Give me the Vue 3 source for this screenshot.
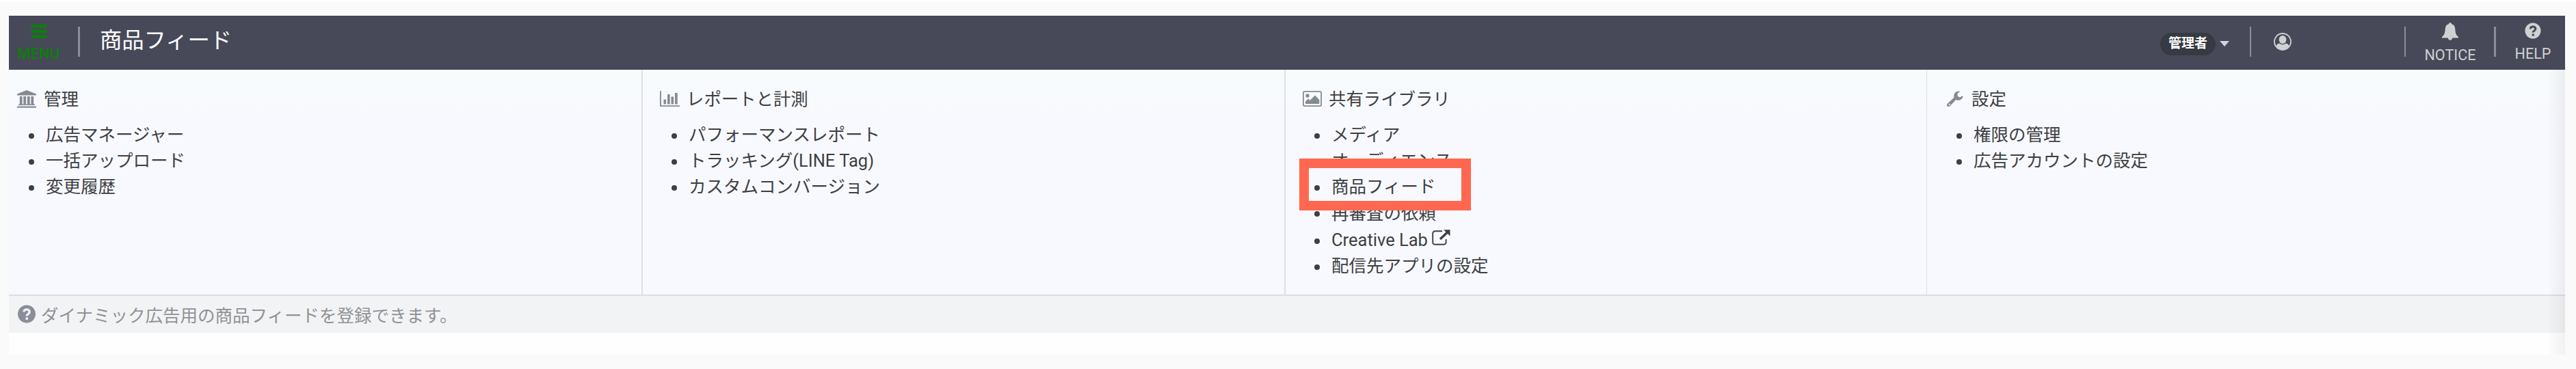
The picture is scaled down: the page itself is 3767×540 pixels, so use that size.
<!-- src/App.vue -->
<template>
  <div class="page">
    <div class="window">
      <header class="navbar">
        <button class="menu-btn">
          <svg class="menu-icon" viewBox="0 0 24 20">
            <path d="M1 2.5h22M1 10h22M1 17.5h22" stroke="currentColor" stroke-width="4.4" />
          </svg>
          <span>MENU</span>
        </button>
        <span class="divider wide"></span>
        <h1 class="page-title">商品フィード</h1>

        <span class="role">管理者</span>
        <span class="caret"></span>
        <span class="divider role-divider"></span>
        <svg class="user-icon" viewBox="0 0 26 26">
          <circle cx="13" cy="13" r="12" fill="none" stroke="currentColor" stroke-width="1.8" />
          <ellipse cx="13" cy="10" rx="5.4" ry="6" fill="currentColor" />
          <path d="M3.600 19.500C4.400 16.400 7 15.800 8.400 15.600c2.700 2.200 6.500 2.200 9.200 0 1.400.2 4 .8 4.800 3.900C20 23 17 25 13 25s-7-2-9.400-5.500z" fill="currentColor" />
        </svg>
        <span class="divider thin"></span>
        <a class="nav-item notice">
          <svg class="bell-icon" viewBox="0 0 24 26">
            <path d="M12 0c1.100 0 1.800.8 1.800 2.100 3.600.9 5.300 3.600 5.500 7.400.3 6 1.500 9.300 4.700 11.500v1.500H0V21c3.200-2.200 4.400-5.500 4.700-11.500.2-3.800 1.900-6.500 5.500-7.400C10.200.8 10.900 0 12 0zM8.800 22h6.400c0 2.300-1.300 3.800-3.200 3.800S8.800 24.300 8.800 22z" fill="currentColor" />
          </svg>
          <span>NOTICE</span>
        </a>
        <span class="divider wide"></span>
        <a class="nav-item help">
          <svg class="help-icon" viewBox="0 0 24 24">
            <circle cx="12" cy="12" r="11.500" fill="currentColor" />
            <path d="M8.200 9.200C8.300 4.800 15.900 4.900 15.900 9.200c0 2.900-3.700 2.700-3.700 5.400" fill="none" stroke="#474959" stroke-width="3" />
            <path d="M10.600 16.500h3.200v3.100h-3.200z" fill="#474959" />
          </svg>
          <span>HELP</span>
        </a>
      </header>

      <main class="body">
        <nav class="mega-menu">
          <section v-for="group in groups" :key="group.title" class="group">
            <h2 class="group-title">
              <span class="group-icon" :class="group.icon">
                <svg v-if="group.icon === 'bank'" width="28" height="26" viewBox="0 0 28 26">
                  <path d="M14 0l14 5.500v2H0v-2zM3.800 9h3.800v11.500H3.800zM9.300 9h3.800v11.500H9.300zM14.900 9h3.800v11.500h-3.800zM20.400 9h3.800v11.500h-3.800zM2 20.500h24V22H2zM0 23.500h28v2.300H0z" fill="currentColor" />
                </svg>
                <svg v-else-if="group.icon === 'chart'" width="29" height="24" viewBox="0 0 29 24">
                  <path d="M0 0h1.900v21.200H29V23H0zM5.500 12.500H9v7H5.500zM11 5h3.600v14.500H11zM16.500 8.500h3.600v11h-3.600zM22 3h3.700v16.500H22z" fill="currentColor" />
                </svg>
                <svg v-else-if="group.icon === 'picture'" width="28" height="23" viewBox="0 0 28 23">
                  <rect x="0.900" y="0.900" width="26.200" height="21.200" rx="2" fill="none" stroke="currentColor" stroke-width="1.800" />
                  <circle cx="7" cy="7" r="2.700" fill="currentColor" />
                  <path d="M4 19v-3.500l4-4 2.500 2.500 7.500-7.500 6.300 6.500v6z" fill="currentColor" />
                </svg>
                <svg v-else width="24" height="24" viewBox="0 0 24 24">
                  <path d="M19.500 1L15.600 3.600v4l3.200 1.900L23.500 7c.2 4.200-3 7.300-7.600 6.700-1-.1-1.800-.5-2.500-1L4.800 21.900c-2.900 3-6.600-.6-3.800-3.400l9.500-8.700C9.100 4.500 13.200-1.400 19.500 1zM3.900 18.700a1.100 1.100 0 1 0 .01 2.200 1.100 1.100 0 0 0 0-2.200z" fill="currentColor" fill-rule="evenodd" />
                </svg>
              </span>
              <span class="group-name">{{ group.title }}</span>
            </h2>
            <ul class="links">
              <li v-for="link in group.links" :key="link.label" :class="{ external: link.external }">
                <a>{{ link.label }}</a>
                <svg v-if="link.external" class="external-icon" viewBox="0 0 27 24">
                  <path d="M15 2.300H4.500a3.300 3.300 0 0 0-3.300 3.300v12.800a3.300 3.300 0 0 0 3.300 3.300h12.800a3.300 3.300 0 0 0 3.300-3.300V14" fill="none" stroke="currentColor" stroke-width="1.900" />
                  <path d="M12 14L23 3.500" stroke="currentColor" stroke-width="3.400" />
                  <path d="M17 .3h9.500v9.200z" fill="currentColor" />
                </svg>
                <span v-if="link.highlight" class="highlight"></span>
              </li>
            </ul>
          </section>
        </nav>

        <div class="info">
          <svg class="info-icon" viewBox="0 0 26 26">
            <circle cx="13" cy="13" r="13" fill="currentColor" />
            <path d="M8.900 10C9 5 17.200 5.100 17.200 10c0 3-4 2.900-4 5.900" fill="none" stroke="#f2f3f5" stroke-width="3.300" />
            <path d="M11.500 18h3.500v3.400h-3.500z" fill="#f2f3f5" />
          </svg>
          <span>ダイナミック広告用の商品フィードを登録できます。</span>
        </div>
      </main>
    </div>
  </div>
</template>

<script setup>
const groups = [
  {
    title: '管理',
    icon: 'bank',
    links: [
      { label: '広告マネージャー' },
      { label: '一括アップロード' },
      { label: '変更履歴' }
    ]
  },
  {
    title: 'レポートと計測',
    icon: 'chart',
    links: [
      { label: 'パフォーマンスレポート' },
      { label: 'トラッキング(LINE Tag)' },
      { label: 'カスタムコンバージョン' }
    ]
  },
  {
    title: '共有ライブラリ',
    icon: 'picture',
    links: [
      { label: 'メディア' },
      { label: 'オーディエンス' },
      { label: '商品フィード', highlight: true },
      { label: '再審査の依頼' },
      { label: 'Creative Lab', external: true },
      { label: '配信先アプリの設定' }
    ]
  },
  {
    title: '設定',
    icon: 'wrench',
    links: [
      { label: '権限の管理' },
      { label: '広告アカウントの設定' }
    ]
  }
]
</script>

<style>
body {
  margin: 0;
  background: #fafafa;
}
</style>

<style scoped>
.page {
  box-sizing: border-box;
  height: 540px;
  padding: 20px 16px 0 13px;
  border-top: 3px solid #fff;
  background: #fafafa;
  font-family: Roboto, "Noto Sans CJK JP", sans-serif;
  font-size: 25.5px;
  color: #3d3f43;
  overflow: hidden;
}

.window {
  height: 496px;
  background: #fefefe;
}

.navbar {
  display: flex;
  align-items: flex-start;
  box-sizing: border-box;
  height: 79px;
  background: #474959;
  border-bottom: 1px solid #3e404f;
  color: #d0d1d3;
}

.menu-btn {
  display: flex;
  flex-direction: column;
  align-items: center;
  width: 61px;
  margin: 13px 27px 0 13px;
  padding: 0;
  border: none;
  background: none;
  color: #0b800b;
  font: 500 22px/24px Roboto, sans-serif;
}

.menu-icon {
  width: 24px;
  height: 20px;
  margin-bottom: 11px;
}

.divider {
  width: 2px;
  height: 44px;
  margin-top: 16px;
  background: #8b8d99;
}

.divider.wide {
  width: 3px;
}

.page-title {
  margin: 12px 0 0 29px;
  font-size: 32.3px;
  font-weight: 400;
  line-height: 48px;
  color: #fff;
}

.role {
  box-sizing: border-box;
  width: 81px;
  height: 33px;
  margin: 25px 0 0 auto;
  border-radius: 17px;
  background: #373a42;
  color: #fff;
  font-size: 19px;
  font-weight: 700;
  line-height: 31px;
  text-align: center;
}

.caret {
  margin: 37px 30px 0 6px;
  border: 7px solid transparent;
  border-top: 8px solid #d0d3e0;
  border-bottom: 0;
}

.user-icon {
  width: 26px;
  height: 26px;
  margin: 25px 165px 0 33px;
}

.nav-item {
  display: flex;
  flex-direction: column;
  align-items: center;
  font-size: 21.6px;
  line-height: 24px;
}

.notice {
  width: 72px;
  margin: 10px 28px 0 29px;
}

.bell-icon {
  width: 24px;
  height: 26px;
  margin-bottom: 10px;
}

.help {
  width: 52px;
  margin: 10px 21px 0 28px;
}

.help-icon {
  width: 24px;
  height: 24px;
  margin-bottom: 10px;
}

/* soft shade along the right edge */
.body {
  position: relative;
}

.body::after {
  content: '';
  position: absolute;
  top: 0;
  right: 0;
  width: 26px;
  height: 417px;
  background: linear-gradient(to right, rgba(80, 80, 80, 0), rgba(80, 80, 80, 0.08));
}

.mega-menu {
  display: grid;
  grid-template-columns: 925px 940px 939px 1fr;
  box-sizing: border-box;
  height: 331px;
  border-bottom: 2px solid #dcdde0;
  background: linear-gradient(#f7fbfc, #f8f9fe 60px);
}

.group {
  padding: 23px 0 0 25px;
  border-left: 2px solid #dcdfe3;
}

.group:first-child {
  padding-left: 12px;
  border-left: none;
}

.group:last-child {
  border-left-width: 1px;
  padding-left: 26px;
}

.group-title {
  display: flex;
  align-items: center;
  height: 38px;
  margin: 0 0 14px;
  font-size: 25.4px;
  font-weight: 400;
  line-height: 38px;
}

.group-name {
  padding-top: 2px;
}

.group-icon {
  display: flex;
  width: 39px;
  padding-top: 1px;
  color: #858b92;
}

.group-icon.picture {
  width: 38px;
}

.group-icon.wrench {
  box-sizing: border-box;
  padding-left: 3px;
}

.links {
  margin: 0;
  padding: 0 0 0 17px;
  list-style: none;
}

.links li {
  position: relative;
  display: flex;
  align-items: center;
  height: 38.2px;
  line-height: 38.2px;
}

.links li a {
  padding-top: 2px;
}

.links li::before {
  content: '';
  width: 8px;
  height: 8px;
  margin: 5px 17px 0 0;
  border-radius: 50%;
  background: #3d3f43;
}

.links li.external {
  margin-top: 1.5px;
}

.external-icon {
  width: 27px;
  height: 24px;
  margin-left: 6px;
  margin-bottom: 4px;
}

.highlight {
  position: absolute;
  top: -21px;
  left: -22px;
  box-sizing: border-box;
  width: 251px;
  height: 76px;
  border: 14px solid #ff6750;
  z-index: 1;
}

.info {
  display: flex;
  align-items: center;
  box-sizing: border-box;
  height: 54px;
  padding: 0 0 2px 13px;
  background: #f2f3f5;
  color: #8f9296;
}

.info-icon {
  width: 26px;
  height: 27px;
  margin-right: 8px;
  color: #8b8e98;
}
</style>
